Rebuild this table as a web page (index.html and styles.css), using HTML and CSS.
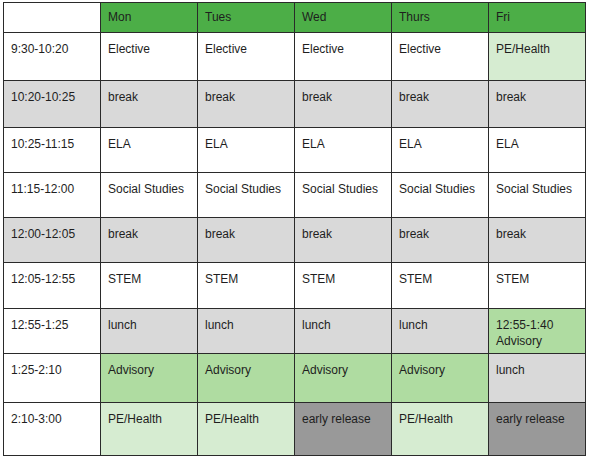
FILE: index.html
```html
<!DOCTYPE html>
<html>
<head>
<meta charset="utf-8">
<link rel="stylesheet" href="styles.css">
</head>
<body>
<table class="schedule">
  <colgroup>
    <col class="c"><col class="c"><col class="c"><col class="c"><col class="c"><col class="c">
  </colgroup>
  <tr class="head r0">
    <td class="blank"></td><td>Mon</td><td>Tues</td><td>Wed</td><td>Thurs</td><td>Fri</td>
  </tr>
  <tr class="r1">
    <td>9:30-10:20</td><td>Elective</td><td>Elective</td><td>Elective</td><td>Elective</td><td class="lg">PE/Health</td>
  </tr>
  <tr class="r2 gray">
    <td>10:20-10:25</td><td>break</td><td>break</td><td>break</td><td>break</td><td>break</td>
  </tr>
  <tr class="r3">
    <td>10:25-11:15</td><td>ELA</td><td>ELA</td><td>ELA</td><td>ELA</td><td>ELA</td>
  </tr>
  <tr class="r4">
    <td>11:15-12:00</td><td>Social Studies</td><td>Social Studies</td><td>Social Studies</td><td>Social Studies</td><td>Social Studies</td>
  </tr>
  <tr class="r5 gray">
    <td>12:00-12:05</td><td>break</td><td>break</td><td>break</td><td>break</td><td>break</td>
  </tr>
  <tr class="r6">
    <td>12:05-12:55</td><td>STEM</td><td>STEM</td><td>STEM</td><td>STEM</td><td>STEM</td>
  </tr>
  <tr class="r7">
    <td>12:55-1:25</td><td class="gr">lunch</td><td class="gr">lunch</td><td class="gr">lunch</td><td class="gr">lunch</td><td class="mg">12:55-1:40<br>Advisory</td>
  </tr>
  <tr class="r8">
    <td>1:25-2:10</td><td class="mg">Advisory</td><td class="mg">Advisory</td><td class="mg">Advisory</td><td class="mg">Advisory</td><td class="gr">lunch</td>
  </tr>
  <tr class="r9">
    <td>2:10-3:00</td><td class="lg">PE/Health</td><td class="lg">PE/Health</td><td class="dg">early release</td><td class="lg">PE/Health</td><td class="dg">early release</td>
  </tr>
</table>
</body>
</html>
```
FILE: styles.css
```css
html, body {
  margin: 0;
  padding: 0;
  background: #ffffff;
}
body {
  padding: 2px 0 0 3px;
  font-family: "Liberation Sans", Arial, sans-serif;
  font-size: 12px;
  color: #1e1e1e;
}
.schedule {
  border-collapse: collapse;
  table-layout: fixed;
  width: 582px;
}
.schedule .c { width: 97px; }
.schedule td {
  border: 1px solid #2a2a2a;
  vertical-align: top;
  padding: 8px 6px 0 7px;
  line-height: 16px;
  white-space: nowrap;
  overflow: hidden;
}
.head td {
  background: #4cae47;
  padding-top: 6px;
}
.head td.blank { background: #fff; }
.gray td { background: #d9d9d9; }
td.lg { background: #d6ecd1; }
td.mg { background: #afdca1; }
td.gr { background: #d9d9d9; }
td.dg { background: #999999; }
.r0 { height: 30px; }
.r1 { height: 48px; }
.r2 { height: 47px; }
.r3 { height: 45px; }
.r4 { height: 45px; }
.r5 { height: 45px; }
.r6 { height: 46px; }
.r7 { height: 45px; }
.r8 { height: 49px; }
.r9 { height: 53px; }
```
